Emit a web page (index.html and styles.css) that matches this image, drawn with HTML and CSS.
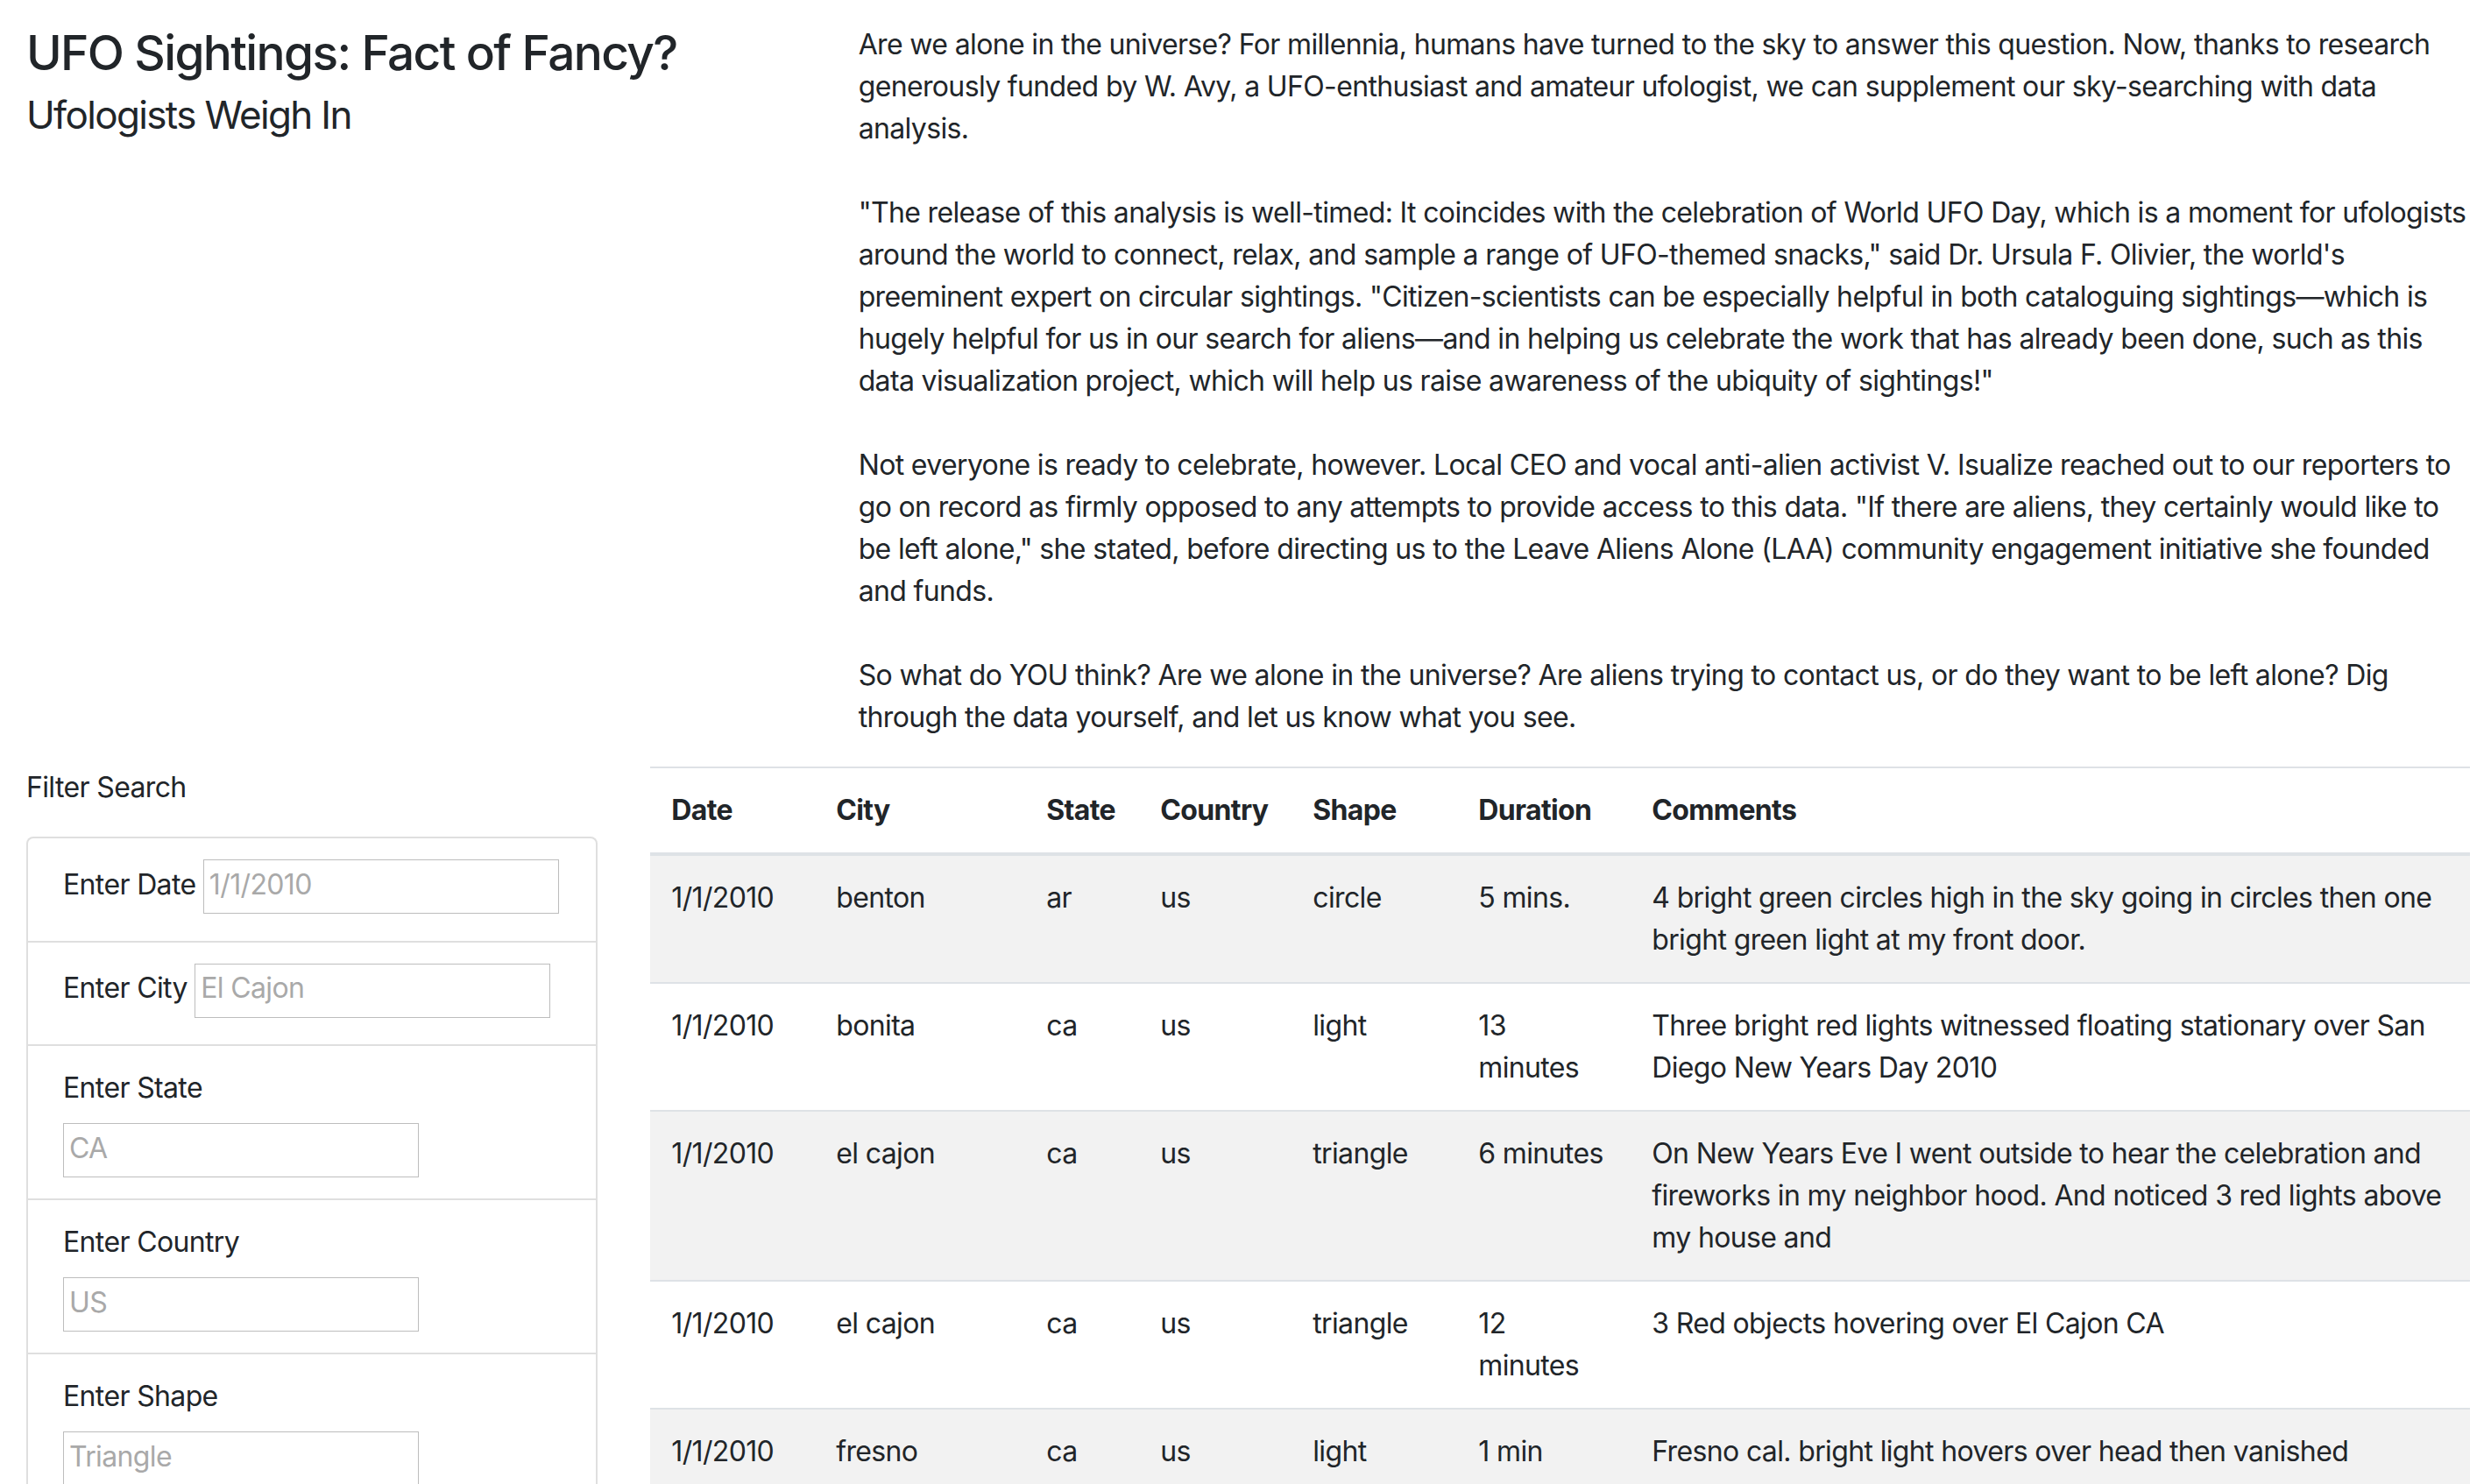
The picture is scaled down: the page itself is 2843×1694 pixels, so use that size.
FILE: index.html
```html
<!DOCTYPE html>
<html lang="en">
<head>
<meta charset="utf-8">
<title>UFO Sightings</title>
<link rel="stylesheet" href="styles.css">
</head>
<body>
<div class="page">
  <div class="row">
    <div class="col col-4">
      <h3 class="title">UFO Sightings: Fact of Fancy?<br><small class="subtitle">Ufologists Weigh In</small></h3>
    </div>
    <div class="col col-8">
      <p class="story">Are we alone in the universe? For millennia, humans have turned to the sky to answer this question. Now, thanks to research<br>generously funded by W. Avy, a UFO-enthusiast and amateur ufologist, we can supplement our sky-searching with data<br>analysis.</p>
      <p class="story">"The release of this analysis is well-timed: It coincides with the celebration of World UFO Day, which is a moment for ufologists<br>around the world to connect, relax, and sample a range of UFO-themed snacks," said Dr. Ursula F. Olivier, the world's<br>preeminent expert on circular sightings. "Citizen-scientists can be especially helpful in both cataloguing sightings—which is<br>hugely helpful for us in our search for aliens—and in helping us celebrate the work that has already been done, such as this<br>data visualization project, which will help us raise awareness of the ubiquity of sightings!"</p>
      <p class="story">Not everyone is ready to celebrate, however. Local CEO and vocal anti-alien activist V. Isualize reached out to our reporters to<br>go on record as firmly opposed to any attempts to provide access to this data. "If there are aliens, they certainly would like to<br>be left alone," she stated, before directing us to the Leave Aliens Alone (LAA) community engagement initiative she founded<br>and funds.</p>
      <p class="story story-last">So what do YOU think? Are we alone in the universe? Are aliens trying to contact us, or do they want to be left alone? Dig<br>through the data yourself, and let us know what you see.</p>
    </div>
  </div>
  <div class="row">
    <div class="col col-3">
      <p class="filter-heading">Filter Search</p>
      <ul class="filters">
        <li class="filter filter-inline"><label for="datetime">Enter Date</label> <input type="text" id="datetime" placeholder="1/1/2010"></li>
        <li class="filter filter-inline"><label for="city">Enter City</label> <input type="text" id="city" placeholder="El Cajon"></li>
        <li class="filter filter-stacked"><label for="state">Enter State</label> <input type="text" id="state" placeholder="CA"></li>
        <li class="filter filter-stacked"><label for="country">Enter Country</label> <input type="text" id="country" placeholder="US"></li>
        <li class="filter filter-stacked"><label for="shape">Enter Shape</label> <input type="text" id="shape" placeholder="Triangle"></li>
        <li class="filter"><button class="filter-btn" type="button">Filter Table</button></li>
      </ul>
    </div>
    <div class="col col-9">
      <table class="sightings">
        <colgroup>
          <col class="c-date"><col class="c-city"><col class="c-state"><col class="c-country"><col class="c-shape"><col class="c-duration"><col>
        </colgroup>
        <thead>
          <tr><th>Date</th><th>City</th><th>State</th><th>Country</th><th>Shape</th><th>Duration</th><th>Comments</th></tr>
        </thead>
        <tbody>
          <tr><td>1/1/2010</td><td>benton</td><td>ar</td><td>us</td><td>circle</td><td>5 mins.</td><td>4 bright green circles high in the sky going in circles then one bright green light at my front door.</td></tr>
          <tr><td>1/1/2010</td><td>bonita</td><td>ca</td><td>us</td><td>light</td><td>13 minutes</td><td>Three bright red lights witnessed floating stationary over San Diego New Years Day 2010</td></tr>
          <tr><td>1/1/2010</td><td>el cajon</td><td>ca</td><td>us</td><td>triangle</td><td>6 minutes</td><td>On New Years Eve I went outside to hear the celebration and fireworks in my neighbor hood. And noticed 3 red lights above my house and</td></tr>
          <tr><td>1/1/2010</td><td>el cajon</td><td>ca</td><td>us</td><td>triangle</td><td>12 minutes</td><td>3 Red objects hovering over El Cajon CA</td></tr>
          <tr><td>1/1/2010</td><td>fresno</td><td>ca</td><td>us</td><td>light</td><td>1 min</td><td>Fresno cal. bright light hovers over head then vanished</td></tr>
          <tr><td>1/1/2010</td><td>la mesa</td><td>ca</td><td>us</td><td>fireball</td><td>20 sec.</td><td>Slow moving orange light crossing the sky</td></tr>
        </tbody>
      </table>
    </div>
  </div>
</div>
</body>
</html>
```
FILE: styles.css
```css
* { box-sizing: border-box; }

body {
  margin: 0;
  font-family: Inter, "Liberation Sans", Arial, sans-serif;
  font-size: 32px;
  line-height: 48px;
  letter-spacing: -0.02em;
  color: #212529;
  background: #fff;
}

.page {
  padding: 27px 24px 0 30px;
}

.row {
  display: flex;
  margin: 0 -30px;
}

.col { padding: 0 30px; min-width: 0; }
.col-4 { flex: 0 0 33.333333%; }
.col-8 { flex: 0 0 66.666667%; }
.col-3 { flex: 0 0 25%; }
.col-9 { flex: 0 0 75%; }

.title {
  margin: 0 0 16px;
  font-size: 55px;
  line-height: 67px;
  font-weight: 500;
  letter-spacing: -0.03em;
}

.subtitle {
  font-size: 44px;
  font-weight: 400;
}

.story {
  margin: 0 0 48px;
}

.story-last { margin-bottom: 32px; }

.filter-heading {
  margin: 0 0 32px;
}

.filters {
  list-style: none;
  margin: 0;
  padding: 0;
}

.filter {
  padding: 24px 40px;
  border: 2px solid rgba(0, 0, 0, 0.125);
  margin-bottom: -2px;
  background: #fff;
}

.filter:first-child { border-radius: 8px 8px 0 0; }
.filter:last-child { border-radius: 0 0 8px 8px; margin-bottom: 0; }

.filter label {
  display: inline-block;
  margin-bottom: 16px;
}

.filter-inline { white-space: nowrap; }
.filter-stacked label { display: block; }

.filter input {
  width: 406px;
  height: 62px;
  padding: 3px 6px 9px;
  border: 1px solid #bdbdbd;
  border-radius: 0;
  font: inherit;
  letter-spacing: inherit;
  color: #212529;
  background: #fff;
}

.filter input::placeholder { color: #a9a9a9; }

.filter-btn {
  font: inherit;
  padding: 12px 24px;
  border: 2px solid #6c757d;
  border-radius: 8px;
  background: #fff;
  color: #6c757d;
}

.sightings {
  width: 100%;
  border-collapse: collapse;
  table-layout: fixed;
}

.c-date { width: 188px; }
.c-city { width: 240px; }
.c-state { width: 130px; }
.c-country { width: 174px; }
.c-shape { width: 189px; }
.c-duration { width: 198px; }

.sightings th,
.sightings td {
  padding: 24px;
  text-align: left;
  vertical-align: top;
  border-top: 2px solid #dee2e6;
}

.sightings thead th {
  vertical-align: bottom;
  border-bottom: 4px solid #dee2e6;
  font-weight: 700;
}

.sightings tbody tr:nth-child(odd) {
  background: rgba(0, 0, 0, 0.05);
}
```
